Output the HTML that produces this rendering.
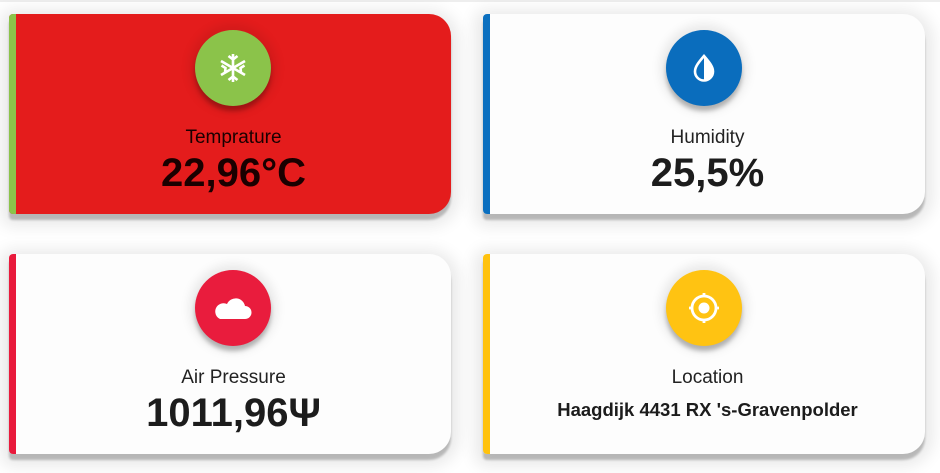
<!DOCTYPE html>
<html><head><meta charset="utf-8"><style>
html,body{margin:0;padding:0;background:#fff;width:940px;height:473px;overflow:hidden;font-family:"Liberation Sans",sans-serif;}
.line{position:absolute;height:2px;background:#eee;}
.card{position:absolute;width:442px;height:200px;background:#fdfdfd;border-radius:4px 22px 22px 4px;
box-shadow:0 6px 2px rgba(0,0,0,0.22),0 4px 16px 8px rgba(0,0,0,0.09);overflow:hidden;}
.bar{position:absolute;left:0;top:0;bottom:0;width:7px;}
.circ{position:absolute;left:50%;top:16px;width:76px;height:76px;margin-left:-38px;border-radius:50%;
box-shadow:0 5px 4px rgba(0,0,0,0.25),0 0 10px 6px rgba(0,0,0,0.08);}
.circ svg{position:absolute;left:0;top:0;}
.lab{position:absolute;left:7px;right:0;top:113px;text-align:center;font-size:19px;color:#222;}
.val{position:absolute;left:7px;right:0;top:137px;text-align:center;font-size:40px;font-weight:bold;color:#1c1c1c;}
</style></head><body>
<div class="line" style="left:0;top:0;width:940px;"></div>

<div class="card" style="left:9px;top:14px;background:#e41c1c">
<div class="bar" style="background:#8bc34a"></div>
<div class="circ" style="background:#8bc34a;margin-left:-35px">
<svg width="76" height="76" viewBox="0 0 76 76" stroke="#fff" stroke-width="2.6" fill="none">
<path d="M38 24v28M26 31l24 14M26 45l24-14M33.5 26l4.5 3.5 4.5-3.5M33.5 50l4.5-3.5 4.5 3.5M26.5 35.5l4 2.5-0.5 4.5M49.5 35.5l-4 2.5 0.5 4.5"/>
</svg></div>
<div class="lab" style="color:#1a0000">Temprature</div>
<div class="val" style="color:#1a0000">22,96°C</div>
</div>

<div class="card" style="left:483px;top:14px">
<div class="bar" style="background:#0b6fbf"></div>
<div class="circ" style="background:#0a6dbd">
<svg width="76" height="76" viewBox="0 0 76 76">
<path d="M38 26c-6 7-9 11-9 15.5a9 9 0 0 0 18 0c0-4.5-3-8.5-9-15.5z" fill="none" stroke="#fff" stroke-width="2.6"/>
<path d="M38 26c6 7 9 11 9 15.5a9 9 0 0 1-9 9z" fill="#fff"/>
</svg></div>
<div class="lab">Humidity</div>
<div class="val">25,5%</div>
</div>

<div class="card" style="left:9px;top:254px">
<div class="bar" style="background:#e91a3c"></div>
<div class="circ" style="background:#e91c3d;margin-left:-35px">
<svg width="76" height="76" viewBox="0 0 76 76">
<path d="M25 49h25a6.5 6.5 0 0 0 0-13a9.5 9.5 0 0 0-18-2a7.5 7.5 0 0 0-7 15z" fill="#fff"/>
</svg></div>
<div class="lab">Air Pressure</div>
<div class="val">1011,96Ψ</div>
</div>

<div class="card" style="left:483px;top:254px">
<div class="bar" style="background:#ffc20e"></div>
<div class="circ" style="background:#ffc312">
<svg width="76" height="76" viewBox="0 0 76 76" stroke="#fff" fill="none">
<circle cx="38" cy="38" r="12" stroke-width="2.8"/><circle cx="38" cy="38" r="5.5" fill="#fff" stroke="none"/>
<path d="M38 23v4M38 49v4M23 38h4M49 38h4" stroke-width="2.8"/>
</svg></div>
<div class="lab">Location</div>
<div class="val" style="font-size:18.5px;top:145px">Haagdijk 4431 RX 's-Gravenpolder</div>
</div>
</body></html>
